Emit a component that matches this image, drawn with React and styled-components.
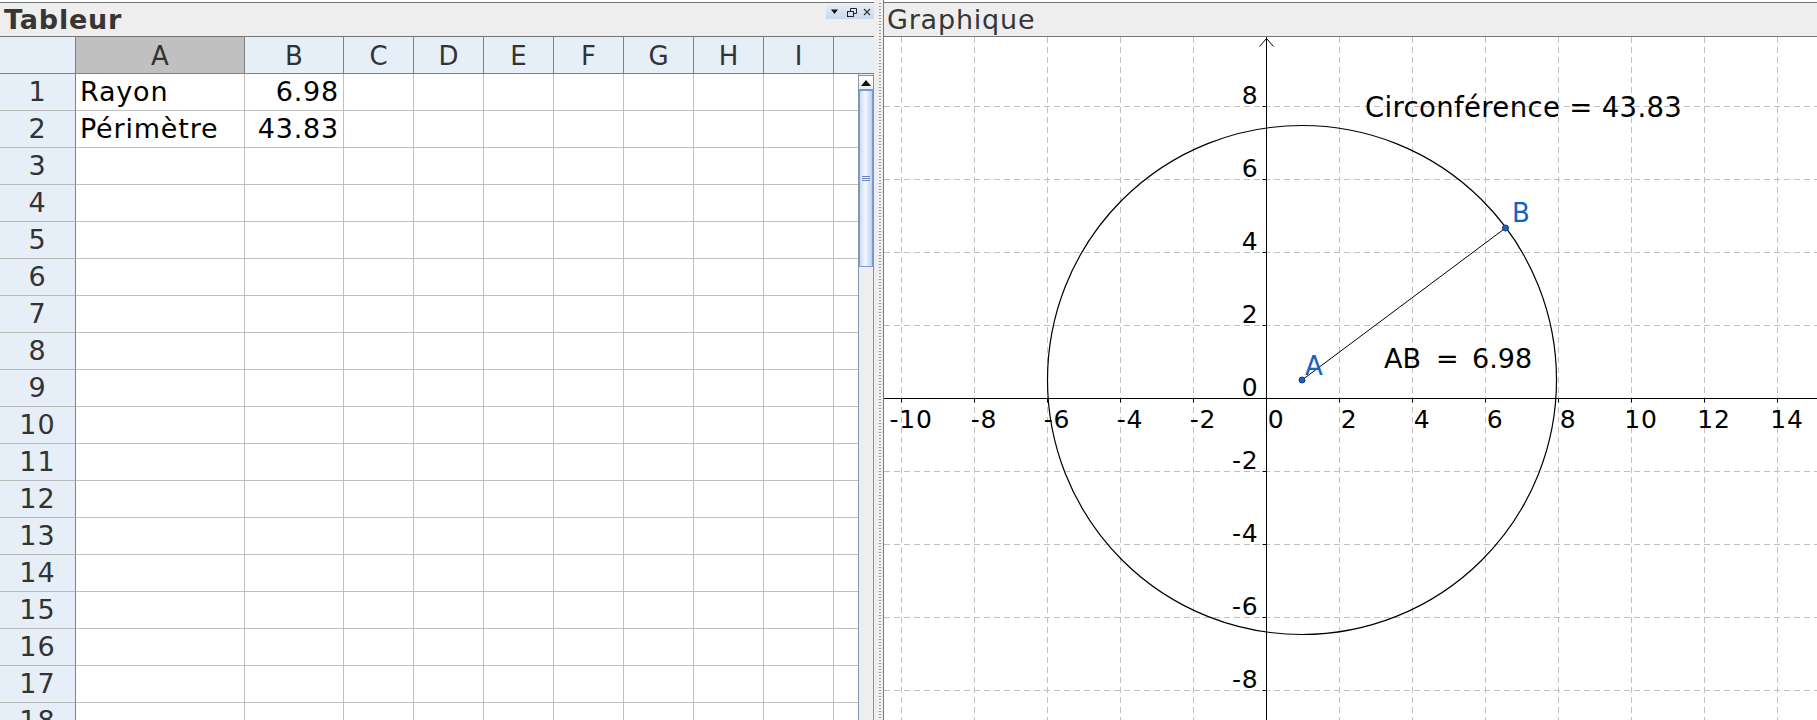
import React from 'react';
import styled, { createGlobalStyle } from 'styled-components';

const GlobalStyle = createGlobalStyle`
  html, body {
    margin: 0;
    padding: 0;
    background: #fff;
  }
  body {
    font-family: 'DejaVu Sans', 'Liberation Sans', sans-serif;
    overflow: hidden;
  }
`;

const COLUMNS = [
  { name: 'A', width: 169 },
  { name: 'B', width: 99 },
  { name: 'C', width: 70 },
  { name: 'D', width: 70 },
  { name: 'E', width: 70 },
  { name: 'F', width: 70 },
  { name: 'G', width: 70 },
  { name: 'H', width: 70 },
  { name: 'I', width: 70 },
];

const DATA = {
  1: { A: 'Rayon', B: '6.98' },
  2: { A: 'Périmètre', B: '43.83' },
};

const ROW_COUNT = 18;

// graph view: origin in canvas pixels, 36.5px per unit
const OX = 382.5;
const OY = 361.5;
const STEP = 73;

const Window = styled.div`
  display: flex;
  width: 1817px;
  height: 720px;
  overflow: hidden;
`;

const SheetPanel = styled.section`
  display: flex;
  flex-direction: column;
  width: 874px;
  padding-top: 2px;
  box-sizing: border-box;
  overflow: hidden;
`;

const GraphPanel = styled.section`
  display: flex;
  flex-direction: column;
  flex: 1;
  padding-top: 2px;
  border-left: 1px solid #7a7a7a;
  overflow: hidden;
`;

const TitleBar = styled.header`
  display: flex;
  align-items: flex-start;
  height: 33px;
  background: #eeeeee;
  border-top: 1px solid #767676;
  border-bottom: 1px solid #767676;
  flex-shrink: 0;
`;

const TitleText = styled.span`
  padding-left: ${({ $bold }) => ($bold ? '4px' : '3px')};
  font-size: 27px;
  letter-spacing: 0.8px;
  line-height: 33px;
  font-weight: ${({ $bold }) => ($bold ? 700 : 400)};
  color: #363636;
`;

const DockButtons = styled.div`
  display: flex;
  margin-left: auto;
  margin-top: 1px;
  width: 48px;
  height: 15px;
  background: linear-gradient(#e6eef8, #c8d8eb);
`;

const HeaderRow = styled.div`
  display: flex;
  height: 37px;
  flex-shrink: 0;
  background: #e6eef8;
  border-bottom: 1px solid #808080;
  box-sizing: border-box;
`;

const HeaderCell = styled.div`
  width: ${({ $w }) => $w}px;
  flex-shrink: 0;
  box-sizing: border-box;
  border-right: 1px solid #808080;
  background: ${({ $selected }) => ($selected ? '#c0c0c0' : 'transparent')};
  text-align: center;
  font-size: 26px;
  line-height: 38px;
  color: #333;
`;

const SheetBody = styled.div`
  display: flex;
  flex: 1;
  min-height: 0;
`;

const Rows = styled.div`
  width: 858px;
  overflow: hidden;
`;

const Row = styled.div`
  display: flex;
  height: 37px;
`;

const RowHeader = styled.div`
  width: 76px;
  flex-shrink: 0;
  box-sizing: border-box;
  background: #e6eef8;
  border-right: 1px solid #808080;
  border-bottom: 1px solid #b8b8b8;
  text-align: center;
  font-size: 27px;
  letter-spacing: 1px;
  line-height: 36px;
  color: #333;
`;

const Cell = styled.div`
  width: ${({ $w }) => $w}px;
  flex-shrink: 0;
  box-sizing: border-box;
  padding: 0 4px;
  border-right: ${({ $last }) => ($last ? 'none' : '1px solid #c0c0c0')};
  border-bottom: 1px solid #c0c0c0;
  text-align: ${({ $numeric }) => ($numeric ? 'right' : 'left')};
  font-size: 27px;
  letter-spacing: 0.8px;
  line-height: 36px;
  color: #000;
  white-space: nowrap;
  overflow: hidden;
`;

const Scrollbar = styled.div`
  display: flex;
  flex-direction: column;
  width: 16px;
  box-sizing: border-box;
  padding-top: 1px;
  background: #eeeeee;
  border-left: 1px solid #8494ad;
  border-right: 1px solid #8494ad;
`;

const ScrollButton = styled.div`
  display: flex;
  align-items: center;
  justify-content: center;
  height: 15px;
  box-sizing: border-box;
  background: linear-gradient(#ffffff, #e9eef5);
  border-top: 1px solid #8494ad;
  border-bottom: 1px solid #8494ad;

  &::after {
    content: '';
    border-left: 5px solid transparent;
    border-right: 5px solid transparent;
    border-bottom: 6px solid #111;
  }
`;

const Thumb = styled.div`
  display: flex;
  align-items: center;
  justify-content: center;
  height: 177px;
  box-sizing: border-box;
  border: 1px solid #7c9ad4;
  background: linear-gradient(to right, #cbdcf0, #f2f7fd 45%, #bfd2ea);
`;

const Grip = styled.div`
  width: 8px;
  height: 5px;
  background: repeating-linear-gradient(#6b86b8 0 1px, transparent 1px 2px);
`;

const Splitter = styled.div`
  width: 9px;
  flex-shrink: 0;
  background: #eeeeee;
  display: flex;
`;

const SplitterDots = styled.div`
  width: 2px;
  margin-left: 5px;
  margin-top: 3px;
  background-image:
    repeating-linear-gradient(#9c9c9c 0 1px, transparent 1px 3px);
`;

const Canvas = styled.div`
  flex: 1;
  background: #fff;
  overflow: hidden;

  svg {
    display: block;
    font-family: 'DejaVu Sans', 'Liberation Sans', sans-serif;
  }
`;

function DockIcons() {
  return (
    <svg width="48" height="15" viewBox="0 0 48 15">
      <path d="M5 5.5h7l-3.5 4.5z" fill="#111" />
      <rect x="21.5" y="7.5" width="6" height="5" fill="none" stroke="#222" />
      <path d="M24.5 7.5v-3h6v5h-3" fill="none" stroke="#222" />
      <path d="M38 5l6 6M44 5l-6 6" stroke="#333" strokeWidth="1.1" />
    </svg>
  );
}

function Spreadsheet() {
  const rows = Array.from({ length: ROW_COUNT }, (_, i) => i + 1);
  return (
    <SheetPanel>
      <TitleBar>
        <TitleText $bold>Tableur</TitleText>
        <DockButtons>
          <DockIcons />
        </DockButtons>
      </TitleBar>
      <HeaderRow>
        <HeaderCell $w={76} />
        {COLUMNS.map((c) => (
          <HeaderCell key={c.name} $w={c.width} $selected={c.name === 'A'}>
            {c.name}
          </HeaderCell>
        ))}
      </HeaderRow>
      <SheetBody>
        <Rows>
          {rows.map((r) => (
            <Row key={r}>
              <RowHeader>{r}</RowHeader>
              {COLUMNS.map((c) => {
                const value = DATA[r]?.[c.name] ?? '';
                return (
                  <Cell key={c.name} $w={c.width} $numeric={/^[\d.]+$/.test(value)}>
                    {value}
                  </Cell>
                );
              })}
              <Cell $w={24} $last />
            </Row>
          ))}
        </Rows>
        <Scrollbar>
          <ScrollButton />
          <Thumb>
            <Grip />
          </Thumb>
        </Scrollbar>
      </SheetBody>
    </SheetPanel>
  );
}

function Graph() {
  const xs = [-5, -4, -3, -2, -1, 0, 1, 2, 3, 4, 5, 6, 7];
  const ys = [-4, -3, -2, -1, 0, 1, 2, 3, 4];
  const A = { x: 418, y: 343 };
  const B = { x: 621.5, y: 191 };
  const blue = '#1565c0';

  return (
    <GraphPanel>
      <TitleBar>
        <TitleText>Graphique</TitleText>
      </TitleBar>
      <Canvas>
        <svg width="933" height="683" viewBox="0 0 933 683">
          <g stroke="#c0c0c0" strokeDasharray="6 4" strokeWidth="1">
            {xs.filter((k) => k !== 0).map((k) => (
              <line key={`gx${k}`} x1={OX + STEP * k} y1="0" x2={OX + STEP * k} y2="683" />
            ))}
            {ys.filter((k) => k !== 0).map((k) => (
              <line key={`gy${k}`} x1="0" y1={OY - STEP * k} x2="933" y2={OY - STEP * k} />
            ))}
          </g>

          <g stroke="#000" strokeWidth="1" fill="none">
            <line x1="0" y1={OY} x2="933" y2={OY} />
            <line x1={OX} y1="0" x2={OX} y2="683" />
            <path d={`M${OX - 7} 9.5L${OX} 1.5L${OX + 7} 9.5`} />
            {xs.filter((k) => k !== 0).map((k) => (
              <line key={`tx${k}`} x1={OX + STEP * k} y1={OY} x2={OX + STEP * k} y2={OY + 4} />
            ))}
            {ys.filter((k) => k !== 0).map((k) => (
              <line key={`ty${k}`} x1={OX - 4} y1={OY - STEP * k} x2={OX} y2={OY - STEP * k} />
            ))}
          </g>

          <g fontSize="25" letterSpacing="0.8" fill="#000">
            {xs.map((k) => (
              <text key={`lx${k}`} x={OX + STEP * k + 9.5} y={OY + 29.5} textAnchor="middle">
                {2 * k}
              </text>
            ))}
            {ys.map((k) => (
              <text key={`ly${k}`} x={OX - 8} y={OY - STEP * k - (k === 0 ? 3 : 2.5)} textAnchor="end">
                {2 * k}
              </text>
            ))}
          </g>

          <circle cx={A.x} cy={A.y} r="254.5" fill="none" stroke="#000" strokeWidth="1.2" />
          <line x1={A.x} y1={A.y} x2={B.x} y2={B.y} stroke="#000" strokeWidth="1" />

          <g fill={blue} stroke="#0b3c78" strokeWidth="1">
            <circle cx={A.x} cy={A.y} r="3" />
            <circle cx={B.x} cy={B.y} r="3" />
          </g>
          <g fontSize="26" fill={blue}>
            <text x="421" y="338">A</text>
            <text x="628" y="185">B</text>
          </g>

          <g fontSize="27.5" letterSpacing="0.35" fill="#000">
            <text x="481" y="80">Circonférence = 43.83</text>
          </g>
          <g fontSize="27" fill="#000">
            <text y="331">
              <tspan x="500">AB</tspan>
              <tspan x="552">=</tspan>
              <tspan x="588">6.98</tspan>
            </text>
          </g>
        </svg>
      </Canvas>
    </GraphPanel>
  );
}

export default function App() {
  return (
    <>
      <GlobalStyle />
      <Window>
        <Spreadsheet />
        <Splitter>
          <SplitterDots />
        </Splitter>
        <Graph />
      </Window>
    </>
  );
}
